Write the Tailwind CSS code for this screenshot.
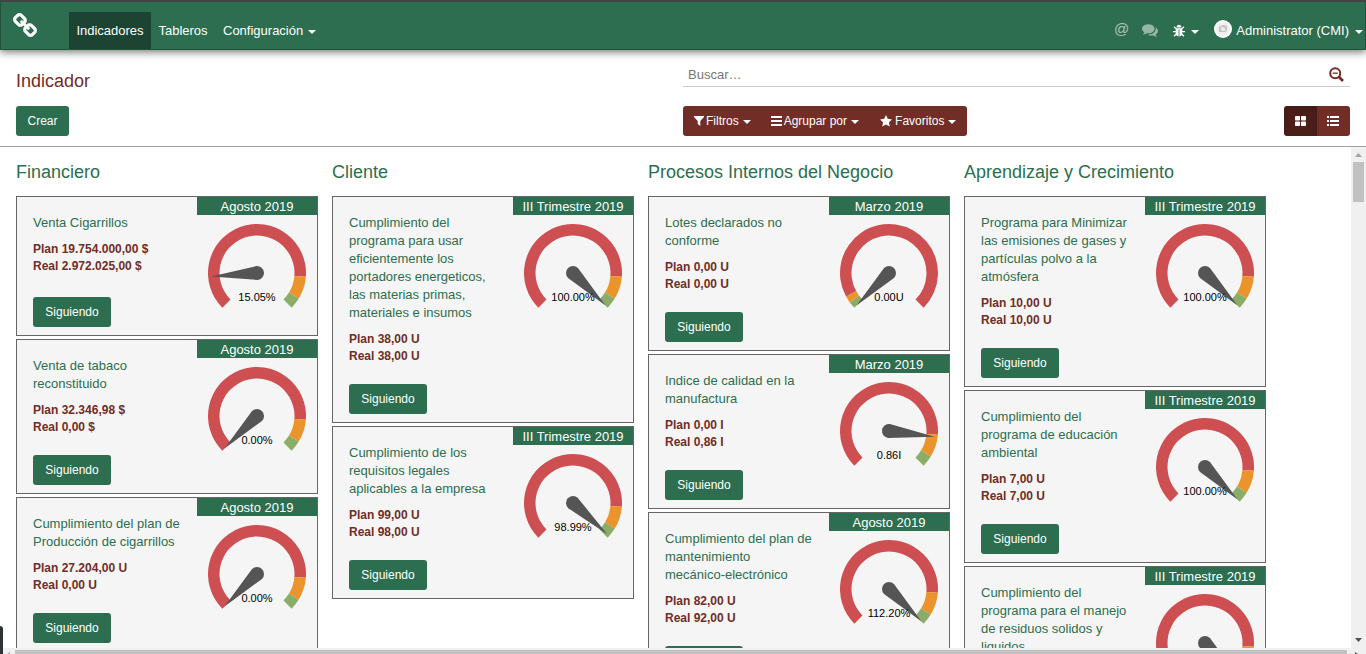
<!DOCTYPE html>
<html lang="es">
<head>
<meta charset="utf-8">
<meta name="viewport" content="width=device-width, initial-scale=1">
<title>Indicador</title>
<script src="https://cdn.jsdelivr.net/npm/@tailwindcss/browser@4"></script>
</head>
<body class="flex h-screen flex-col overflow-hidden bg-white font-['Liberation_Sans',Arial,sans-serif] text-[13px] text-[#2c6e4f]">

<svg class="hidden" aria-hidden="true">
  <symbol id="caret" viewBox="0 0 8 4"><path d="M0 0h8L4 4z" fill="currentColor"/></symbol>
</svg>

<header class="relative z-10 flex h-[50px] shrink-0 items-end justify-between border border-t-2 border-[#23523c] border-t-[#444] bg-[#2c6e4f] text-white shadow-[0_2px_8px_rgba(0,0,0,0.55)]">
  <div class="flex items-end">
    <a href="#" aria-label="Inicio" class="mb-3 ml-3 block w-14">
      <svg class="size-6" viewBox="0 0 1664 1664" fill="currentColor" stroke="currentColor" stroke-width="40"><path d="M1456 1216q0-40-28-68l-208-208q-28-28-68-28-42 0-72 32 3 3 19 18.500t21.500 21.500 15 19 13 25.500 3.500 27.500q0 40-28 68t-68 28q-15 0-27.500-3.500t-25.500-13-19-15-21.500-21.500-18.500-19q-33 31-33 73 0 40 28 68l206 207q27 27 68 27 40 0 68-26l147-146q28-28 28-67zm-703-705q0-40-28-68l-206-207q-28-28-68-28-39 0-68 27l-147 146q-28 28-28 67 0 40 28 68l208 208q27 27 68 27 42 0 72-31-3-3-19-18.500t-21.500-21.500-15-19-13-25.500-3.500-27.500q0-40 28-68t68-28q15 0 27.500 3.500t25.500 13 19 15 21.500 21.500 18.500 19q33-31 33-73zm895 705q0 120-85 203l-147 146q-83 83-203 83-121 0-204-85l-206-207q-83-83-83-203 0-123 88-209l-88-88q-86 88-208 88-120 0-204-84l-208-208q-84-84-84-204t85-203l147-146q83-83 203-83 121 0 204 85l206 207q83 83 83 203 0 123-88 209l88 88q86-88 208-88 120 0 204 84l208 208q84 84 84 204z"/></svg>
    </a>
    <nav class="flex">
      <a href="#" class="flex h-[37px] w-[82px] items-center justify-center bg-[#1d4433]">Indicadores</a>
      <a href="#" class="flex h-[37px] w-16 items-center justify-center">Tableros</a>
      <a href="#" class="flex h-[37px] items-center gap-[5px] px-2">Configuración <svg class="mt-[2px] h-1 w-2"><use href="#caret"/></svg></a>
    </nav>
  </div>
  <div class="flex h-[37px] items-center gap-[13px]">
    <button aria-label="Menciones" class="pb-[2px] text-[15px] text-white/60">@</button>
    <button aria-label="Mensajes" class="text-white/50">
      <svg class="h-[14px] w-4" viewBox="0 0 1792 1536" fill="currentColor"><path d="M1408 512q0 139-94 257T1057.500 955.500 704 1024q-86 0-176-16-124 88-278 128-36 9-86 16h-3q-11 0-20.500-8t-11.500-21q-1-3-1-6.500t.5-6.500 2-6l2.500-5 3.500-5.500 4-5 4.500-5 4-4.500q5-6 23-25t26-29.500 22.500-29 25-38.500 20.500-44Q142 846 71 738T0 512q0-139 94-257T350.500 68.500 704 0t353.500 68.500T1314 255t94 257zm384 256q0 120-71 224.500T1526 1169q10 24 20.500 44t25 38.500 22.500 29 26 29.500 23 25q1 1 4 4.500t4.500 5 4 5 3.500 5.500l2.500 5 2 6 .5 6.500-1 6.500q-3 14-13 22t-22 7q-50-7-86-16-154-40-278-128-90 16-176 16-271 0-472-132 58 4 88 4 161 0 309-45t264-129q125-92 192-212t67-254q0-77-23-152 129 71 204 178t75 230z"/></svg>
    </button>
    <button aria-label="Depuración" class="ml-[2px] flex items-center gap-[6px]">
      <svg class="h-[13px] w-[12px]" viewBox="0 0 12 13" fill="currentColor"><path d="M3.500 3.500C3.500 1.800 4.500.7 6 .7s2.500 1.100 2.500 2.800z"/><path d="M2.700 4.300h6.600v4.400c0 2.400-1.200 3.500-2.900 3.700V5.600h-.8v6.800c-1.700-.2-2.900-1.300-2.900-3.700z"/><path d="M1 2.800l2.200 2.100M11 2.800 8.800 4.900M0 7.600h3M12 7.600H9M1 12.200l2.500-2.400M11 12.200 8.500 9.800" stroke="currentColor" stroke-width="1.200"/></svg>
      <svg class="mt-[2px] h-1 w-2"><use href="#caret"/></svg>
    </button>
    <button class="ml-[2px] flex items-center gap-1">
      <svg class="mb-1 size-[18px]" viewBox="0 0 18 18"><circle cx="9" cy="9" r="9" fill="#fff"/><circle cx="9" cy="9" r="7" fill="#f0f0f0"/><path d="M5 6h2l1-1h3l1 1h1v6H5z" fill="#c4c4c4"/><circle cx="9" cy="9" r="2" fill="#eee"/><path d="m5 5 8 7" stroke="#eee"/></svg>
      Administrator (CMI)
      <svg class="mt-[2px] mr-[2px] ml-[2px] h-1 w-2"><use href="#caret"/></svg>
    </button>
  </div>
</header>

<section class="grid shrink-0 grid-cols-2 border-b border-[#a0a0a0] px-4 pt-3 pb-[10px]">
  <div class="flex flex-col items-start">
    <h1 class="flex h-[37px] items-center pt-[2px] text-[18px] text-[#712d26]">Indicador</h1>
    <button class="mt-[7px] h-[30px] w-[53px] rounded-[3px] bg-[#2c6e4f] text-[12px] text-white">Crear</button>
  </div>
  <div>
    <div class="flex h-[25px] items-center border-b border-[#ccc] pr-[6px] pl-[5px]">
      <input type="text" aria-label="Buscar" placeholder="Buscar…" class="h-full min-w-0 flex-1 outline-none placeholder:text-[#777]">
      <button aria-label="Búsqueda avanzada" class="text-[#712d26]">
        <svg class="size-[15px]" viewBox="0 0 15 15" fill="none" stroke="currentColor"><circle cx="6.200" cy="6.200" r="5" stroke-width="2"/><path d="m10 10 4 4" stroke-width="2.600"/><path d="M3.600 6.200h5.200" stroke-width="1.300"/></svg>
      </button>
    </div>
    <div class="mt-[19px] flex justify-between">
      <div class="flex h-[30px] rounded-[3px] bg-[#712d26] text-[12px] text-white">
        <button class="flex items-center gap-[2px] pr-[10px] pl-[11px]"><svg class="size-[10px]" viewBox="0 0 10 10" fill="currentColor"><path d="M0 0h10v1L6.300 5v5L3.700 8V5L0 1z"/></svg>Filtros<svg class="mt-[2px] ml-[2px] h-1 w-2"><use href="#caret"/></svg></button>
        <button class="flex items-center gap-[2px] px-[10px]"><svg class="h-[10px] w-[11px]" viewBox="0 0 11 10" fill="currentColor"><path d="M0 0h11v2H0zM0 4h11v2H0zM0 8h11v2H0z"/></svg>Agrupar por<svg class="mt-[2px] ml-[2px] h-1 w-2"><use href="#caret"/></svg></button>
        <button class="flex items-center gap-[3px] px-[11px]"><svg class="size-[12px]" viewBox="0 0 12 12" fill="currentColor"><path d="m6 0 1.800 3.800 4.200.6-3 2.900.7 4.200L6 9.500l-3.700 2 .7-4.200-3-2.900 4.200-.6z"/></svg>Favoritos<svg class="mt-[2px] ml-[1px] h-1 w-2"><use href="#caret"/></svg></button>
      </div>
      <div class="flex h-[30px] overflow-hidden rounded-[3px] text-white">
        <button aria-label="Vista kanban" aria-pressed="true" class="flex w-[33px] items-center justify-center bg-[#4b1e19] shadow-[inset_0_3px_5px_rgba(0,0,0,0.125)]"><svg class="h-[10px] w-[11px]" viewBox="0 0 11 10" fill="currentColor"><rect width="5" height="4.500" rx=".7"/><rect x="6" width="5" height="4.500" rx=".7"/><rect y="5.500" width="5" height="4.500" rx=".7"/><rect x="6" y="5.500" width="5" height="4.500" rx=".7"/></svg></button>
        <button aria-label="Vista lista" class="flex w-[33px] items-center justify-center bg-[#712d26] pr-[1px]"><svg class="h-[10px] w-3" viewBox="0 0 12 10" fill="currentColor"><path d="M0 0h2v2H0zM3 0h9v2H3zM0 4h2v2H0zM3 4h9v2H3zM0 8h2v2H0zM3 8h9v2H3z"/></svg></button>
      </div>
    </div>
  </div>
</section>

<div class="flex min-h-0 flex-1">
  <main id="board" class="flex min-w-0 flex-1 gap-[14px] overflow-hidden pl-4"></main>
  <div class="flex w-[15px] shrink-0 flex-col items-center bg-[#f0f0f0]" aria-hidden="true">
    <svg class="mt-[6px] h-1 w-[7px]" viewBox="0 0 7 4"><path d="M0 4h7L3.500 0z" fill="#a3a3a3"/></svg>
    <div class="mt-[5px] h-10 w-[11px] bg-[#c1c1c1]"></div>
    <svg class="mt-auto mb-[6px] h-1 w-[7px]" viewBox="0 0 7 4"><path d="M0 0h7L3.500 4z" fill="#505050"/></svg>
  </div>
</div>
<div class="relative flex h-[6px] shrink-0 items-end bg-[#f0f0f0] pr-[19px] pl-[15px]" aria-hidden="true">
  <div class="h-1 flex-1 bg-[#c1c1c1]"></div>
  <div class="absolute bottom-0 left-0 h-7 w-[3px] rounded-tr-[3px] bg-[#2e3436]"></div>
  <svg class="absolute bottom-0 left-[7px] h-[2px] w-[3px]" viewBox="0 0 3 2"><path d="M0 2 3 0v2z" fill="#a3a3a3"/></svg>
  <svg class="absolute right-[8px] bottom-0 h-[2px] w-[3px]" viewBox="0 0 3 2"><path d="M0 0l3 2H0z" fill="#505050"/></svg>
</div>

<script>
const A = 'Agosto 2019', M = 'Marzo 2019', T = 'III Trimestre 2019';
// [title, plan, real, period, value label, needle fraction, lower-is-better]
const columns = [
  ['Financiero', [
    ['Venta Cigarrillos', '19.754.000,00 $', '2.972.025,00 $', A, '15.05%', 0.1505],
    ['Venta de tabaco reconstituido', '32.346,98 $', '0,00 $', A, '0.00%', 0],
    ['Cumplimiento del plan de Producción de cigarrillos', '27.204,00 U', '0,00 U', A, '0.00%', 0]]],
  ['Cliente', [
    ['Cumplimiento del programa para usar eficientemente los portadores energeticos, las materias primas, materiales e insumos', '38,00 U', '38,00 U', T, '100.00%', 1],
    ['Cumplimiento de los requisitos legales aplicables a la empresa', '99,00 U', '98,00 U', T, '98.99%', 0.9899]]],
  ['Procesos Internos del Negocio', [
    ['Lotes declarados no conforme', '0,00 U', '0,00 U', M, '0.00U', 0, true],
    ['Indice de calidad en la manufactura', '0,00 I', '0,86 I', M, '0.86I', 0.86],
    ['Cumplimiento del plan de mantenimiento <span class="whitespace-nowrap">mecánico-electrónico</span>', '82,00 U', '92,00 U', A, '112.20%', 1]]],
  ['Aprendizaje y Crecimiento', [
    ['Programa para Minimizar las emisiones de gases y partículas polvo a la atmósfera', '10,00 U', '10,00 U', T, '100.00%', 1],
    ['Cumplimiento del programa de educación ambiental', '7,00 U', '7,00 U', T, '100.00%', 1],
    ['Cumplimiento del programa para el manejo de residuos solidos y liquidos', '4,00 U', '4,00 U', T, '100.00%', 1]]]
];

// Dial sweeps 270 degrees, starting at the lower left
function point(f, r) {
  const a = (135 + 270 * f) * Math.PI / 180;
  return (50 + r * Math.cos(a)).toFixed(2) + ' ' + (50 + r * Math.sin(a)).toFixed(2);
}
function arc(from, to, color) {
  const big = (to - from) * 270 > 180 ? 1 : 0;
  return `<path fill="${color}" d="M${point(from, 49)}A49 49 0 ${big} 1 ${point(to, 49)}L${point(to, 37.5)}A37.5 37.5 0 ${big} 0 ${point(from, 37.5)}z"/>`;
}
function gauge(label, f, low) {
  const red = '#cd4f51', amber = '#ec942c', green = '#8aae68';
  const arcs = low
    ? arc(0, 0.03, green) + arc(0.03, 0.06, amber) + arc(0.06, 1, red)
    : arc(0, 0.85, red) + arc(0.85, 0.95, amber) + arc(0.95, 1, green);
  return `<svg class="mt-2 size-[100px]" viewBox="0 0 100 100" role="img" aria-label="${label}">${arcs}
    <path d="M0-7A7 7 0 1 0 0 7L46 0z" fill="#555" transform="translate(50 50) rotate(${135 + 270 * f})"/>
    <text x="50" y="78" text-anchor="middle" font-size="11" fill="#000">${label}</text></svg>`;
}
document.getElementById('board').innerHTML = columns.map(([name, cards]) => `
  <section class="w-[302px] shrink-0">
    <h2 class="flex h-[49px] items-center pt-[2px] text-[18px]">${name}</h2>
    <div class="flex flex-col gap-[3px]">${cards.map(([title, plan, real, period, label, f, low]) => `
      <article class="flex min-h-[140px] justify-between border border-[#666] bg-[#f5f5f5]">
        <div class="flex w-[166px] flex-col items-start pt-[17px] pb-2 pl-4">
          <h3 class="leading-[18px]">${title}</h3>
          <p class="mt-[9px] mb-[19px] text-[12px] leading-[17px] font-bold text-[#712d26]">Plan ${plan}<br>Real ${real}</p>
          <button class="mt-auto h-[30px] w-[78px] rounded-[3px] bg-[#2c6e4f] text-[12px] text-white">Siguiendo</button>
        </div>
        <div class="flex w-[120px] flex-col items-center">
          <div class="h-[18px] w-full bg-[#2c6e4f] text-center leading-[20px] text-white">${period}</div>
          ${gauge(label, f, low)}
        </div>
      </article>`).join('')}
    </div>
  </section>`).join('');
</script>
</body>
</html>
